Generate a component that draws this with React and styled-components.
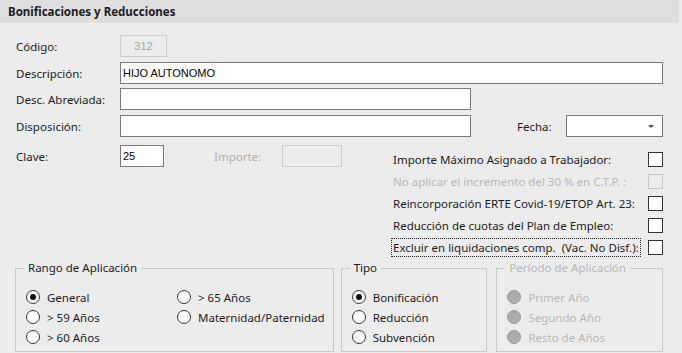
import React from 'react';
import { createGlobalStyle, styled } from 'styled-components';

const GlobalStyle = createGlobalStyle`
    body {
        margin: 0;
        background: #ececec;
        font-family: "Noto Sans", sans-serif;
        color: #1c1c1c;
    }
`;

const Page = styled.div`
    width: 682px;
    height: 353px;
    overflow: hidden;
    background: #ececec;
`;

const Header = styled.div`
    height: 23px;
    margin-right: 3px;
    padding-left: 8px;
    display: flex;
    align-items: center;
    background: #dfdfdf;
    font-size: 11.5px;
    font-weight: bold;
    color: #202020;
`;

const Body = styled.div`
    padding: 12px 19px 0 16px;
`;

const Row = styled.div`
    display: flex;
    align-items: center;
    height: 22px;
    margin-top: ${(p) => p.$gap || 0}px;
`;

const Label = styled.span`
    width: ${(p) => (p.$width ? `${p.$width}px` : 'auto')};
    flex: none;
    font-size: 11.5px;
    color: ${(p) => (p.$disabled ? '#b0b0b0' : '#1c1c1c')};
    margin-left: ${(p) => p.$left || 0}px;
    margin-right: ${(p) => p.$right || 0}px;
`;

const TextInput = styled.input`
    box-sizing: border-box;
    height: 22px;
    width: ${(p) => (p.$width ? `${p.$width}px` : 'auto')};
    flex: ${(p) => (p.$width ? 'none' : '1')};
    margin: 0;
    padding: 0 2px;
    border: 1px solid ${(p) => (p.disabled ? '#cdcdcd' : '#7a7a7a')};
    background: ${(p) => (p.disabled ? '#ececec' : '#ffffff')};
    color: ${(p) => (p.disabled ? '#a8a8a8' : '#000')};
    text-align: ${(p) => (p.$center ? 'center' : 'left')};
    font-family: "Liberation Sans", Arial, sans-serif;
    font-size: 11px;
    outline: none;
`;

const Select = styled.div`
    box-sizing: border-box;
    width: 97px;
    height: 22px;
    margin-left: auto;
    border: 1px solid #7a7a7a;
    background: #fff;
    display: flex;
    align-items: center;
    justify-content: flex-end;
    padding-right: 8px;
`;

const Caret = styled.span`
    width: 0;
    height: 0;
    border-left: 3px solid transparent;
    border-right: 3px solid transparent;
    border-top: 3px solid #555;
`;

const Lower = styled.div`
    display: flex;
    align-items: flex-start;
    margin-top: 8px;
`;

const CheckList = styled.div`
    width: 272px;
    margin-left: auto;
    margin-top: 3px;
`;

const CheckRow = styled.div`
    display: flex;
    align-items: center;
    justify-content: space-between;
    height: 22px;
`;

const CheckText = styled.span`
    font-size: 11.5px;
    padding: 1px 1px;
    border: 1px dotted ${(p) => (p.$focus ? '#222' : 'transparent')};
    color: ${(p) => (p.$disabled ? '#b8b8b8' : '#1c1c1c')};
    white-space: pre;
`;

const Box = styled.span`
    box-sizing: border-box;
    width: 15px;
    height: 15px;
    border: 1px solid ${(p) => (p.$disabled ? '#c6c6c6' : '#333')};
    background: ${(p) => (p.$disabled ? '#ececec' : '#fff')};
`;

const Groups = styled.div`
    display: flex;
    margin: 2px 0 0 -1px;
`;

const Group = styled.fieldset`
    box-sizing: border-box;
    width: ${(p) => p.$width}px;
    height: 92px;
    margin: 0 ${(p) => p.$gap || 0}px 0 0;
    padding: 11px 8px 3px 10px;
    border: 1px solid #c9c9c9;
`;

const Legend = styled.legend`
    margin-left: -2px;
    padding: 0 4px;
    font-size: 11.5px;
    line-height: 16px;
    color: ${(p) => (p.$disabled ? '#b8b8b8' : '#1c1c1c')};
`;

const RadioGrid = styled.div`
    display: grid;
    grid-template-columns: ${(p) => p.$cols || '1fr'};
    grid-template-rows: repeat(3, 20px);
    grid-auto-flow: column;
`;

const RadioItem = styled.div`
    display: flex;
    align-items: center;
    gap: 7px;
    font-size: 11.5px;
    color: ${(p) => (p.$disabled ? '#b8b8b8' : '#1c1c1c')};
`;

const Circle = styled.span`
    box-sizing: border-box;
    width: 14px;
    height: 14px;
    border-radius: 50%;
    border: 1px solid ${(p) => (p.$disabled ? '#9c9c9c' : '#333')};
    background: ${(p) => (p.$disabled ? '#acacac' : '#fff')};
    display: flex;
    align-items: center;
    justify-content: center;

    &::after {
        content: '';
        width: 6px;
        height: 6px;
        border-radius: 50%;
        background: #111;
        display: ${(p) => (p.$checked ? 'block' : 'none')};
    }
`;

const Radio = ({ label, checked, disabled }) => (
    <RadioItem $disabled={disabled}>
        <Circle $checked={checked} $disabled={disabled} />
        {label}
    </RadioItem>
);

const checks = [
    { text: 'Importe Máximo Asignado a Trabajador:' },
    { text: 'No aplicar el incremento del 30 % en C.T.P. :', disabled: true },
    { text: 'Reincorporación ERTE Covid-19/ETOP Art. 23:' },
    { text: 'Reducción de cuotas del Plan de Empleo:' },
    { text: 'Excluir en liquidaciones comp.  (Vac. No Disf.):', focus: true },
];

const App = () => {
    return (
        <Page>
            <GlobalStyle />
            <Header>Bonificaciones y Reducciones</Header>
            <Body>
                <Row>
                    <Label $width={104}>Código:</Label>
                    <TextInput $width={47} $center disabled defaultValue="312" />
                </Row>
                <Row $gap={5}>
                    <Label $width={104}>Descripción:</Label>
                    <TextInput defaultValue="HIJO AUTONOMO" />
                </Row>
                <Row $gap={4}>
                    <Label $width={104}>Desc. Abreviada:</Label>
                    <TextInput $width={351} />
                </Row>
                <Row $gap={5}>
                    <Label $width={104}>Disposición:</Label>
                    <TextInput $width={351} />
                    <Label $left={46}>Fecha:</Label>
                    <Select>
                        <Caret />
                    </Select>
                </Row>
                <Lower>
                    <Row>
                        <Label $width={104}>Clave:</Label>
                        <TextInput $width={44} defaultValue="25" />
                        <Label $left={50} $right={21} $disabled>Importe:</Label>
                        <TextInput $width={60} disabled />
                    </Row>
                    <CheckList>
                        {checks.map((c) => (
                            <CheckRow key={c.text}>
                                <CheckText $disabled={c.disabled} $focus={c.focus}>{c.text}</CheckText>
                                <Box $disabled={c.disabled} />
                            </CheckRow>
                        ))}
                    </CheckList>
                </Lower>
                <Groups>
                    <Group $width={318} $gap={7}>
                        <Legend>Rango de Aplicación</Legend>
                        <RadioGrid $cols="151px 1fr">
                            <Radio label="General" checked />
                            <Radio label="> 59 Años" />
                            <Radio label="> 60 Años" />
                            <Radio label="> 65 Años" />
                            <Radio label="Maternidad/Paternidad" />
                        </RadioGrid>
                    </Group>
                    <Group $width={147} $gap={9}>
                        <Legend>Tipo</Legend>
                        <RadioGrid>
                            <Radio label="Bonificación" checked />
                            <Radio label="Reducción" />
                            <Radio label="Subvención" />
                        </RadioGrid>
                    </Group>
                    <Group $width={167}>
                        <Legend $disabled>Período de Aplicación</Legend>
                        <RadioGrid>
                            <Radio label="Primer Año" disabled />
                            <Radio label="Segundo Año" disabled />
                            <Radio label="Resto de Años" disabled />
                        </RadioGrid>
                    </Group>
                </Groups>
            </Body>
        </Page>
    );
};

export default App;
